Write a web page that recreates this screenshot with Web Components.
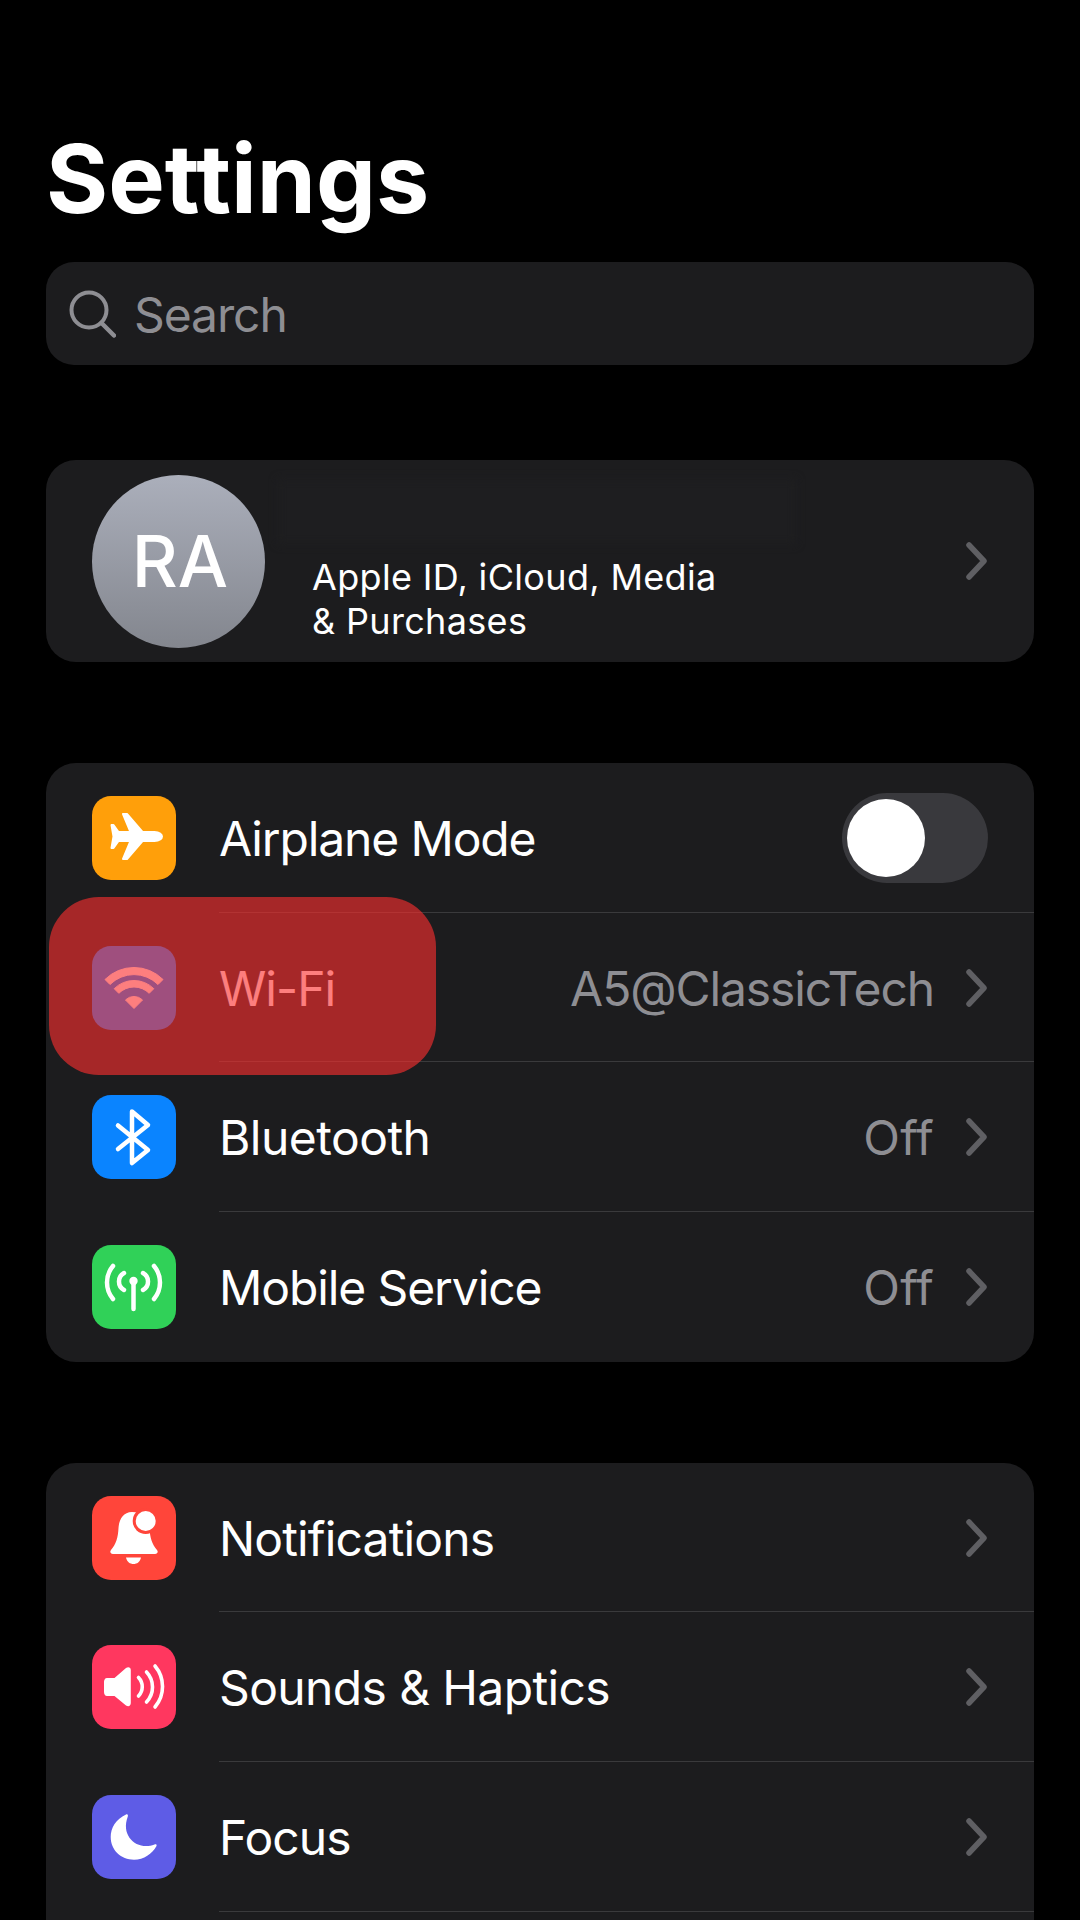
<!DOCTYPE html>
<html lang="en">
<head>
<meta charset="utf-8">
<title>Settings</title>
<style>
    html, body { margin: 0; background: #000; }
    body { width: 1080px; height: 1920px; overflow: hidden; font-family: Inter, "Liberation Sans", sans-serif; color: #fff; }
</style>
</head>
<body>
<settings-page>
    <settings-search slot="search">Search</settings-search>

    <profile-card slot="profile" initials="RA">Apple ID, iCloud, Media<br>&amp; Purchases</profile-card>

    <settings-group slot="groups">
        <settings-row color="#ff9f0a" label="Airplane Mode" toggle style="--track:-1.130px">
            <svg slot="icon" viewBox="0 0 84 84" width="84" height="84"><path fill="#fff" stroke="#fff" stroke-width="2" stroke-linejoin="round" d="M19.500 29H21.500L26.500 36H38.500L31 18H35L50.500 36H62.500C67.500 36 70 38.500 70 40.500C70 42.500 67.500 45 62.500 45H50.500L35 63H31L38.500 45H26.500L21.500 52H19.500L21.500 40.500Z"/></svg>
        </settings-row>
        <settings-row color="#0a84ff" label="Wi-Fi" value="A5@ClassicTech" style="--track:-0.950px">
            <svg slot="icon" viewBox="0 0 84 84" width="84" height="84"><g fill="#fff" stroke="#fff" stroke-width="1" stroke-linejoin="round"><path d="M13 33.500A41 41 0 0 1 71 33.500L66 38.500A34 34 0 0 0 18 38.500Z"/><path d="M22.200 42.700A28 28 0 0 1 61.800 42.700L57.200 47.300A21.500 21.500 0 0 0 26.800 47.300Z"/><path d="M42 62.500L33.500 54A12 12 0 0 1 50.500 54Z"/></g></svg>
        </settings-row>
        <settings-row color="#0a84ff" label="Bluetooth" value="Off" style="--track:-0.540px;--value-track:0.100px">
            <svg slot="icon" viewBox="0 0 84 84" width="84" height="84"><path fill="none" stroke="#fff" stroke-width="4.500" stroke-linecap="round" stroke-linejoin="round" d="M26 30.500L56 55L40 68V16.500L56 30L26 54"/></svg>
        </settings-row>
        <settings-row color="#30d158" label="Mobile Service" value="Off" last style="--track:-1.110px;--value-track:0.100px">
            <svg slot="icon" viewBox="0 0 84 84" width="84" height="84"><g fill="none" stroke="#fff" stroke-width="4.500" stroke-linecap="round"><path d="M41.500 38V64"/><path d="M32 28A9.700 9.700 0 0 0 32 45"/><path d="M51 28A9.700 9.700 0 0 1 51 45"/><path d="M21 21A25.700 25.700 0 0 0 21 54"/><path d="M62 21A25.700 25.700 0 0 1 62 54"/></g><circle cx="41.500" cy="36" r="4.200" fill="#fff"/></svg>
        </settings-row>
        <wifi-mark></wifi-mark>
    </settings-group>

    <settings-group slot="groups">
        <settings-row color="#ff453a" label="Notifications" style="--track:-0.850px">
            <svg slot="icon" viewBox="0 0 84 84" width="84" height="84"><path fill="#fff" d="M40 16C31 16 27 24 26.500 32C26 42 24 48 19 54C17.500 56 18.500 58 21 58H63C65.500 58 66.500 56 65 54C60 48 58 42 57.500 32C57 24 50 16 40 16Z"/><path fill="#fff" d="M34 61.500H49C48 66 45 68 41.500 68C38 68 35 66 34 61.500Z"/><circle cx="53.700" cy="25" r="13" fill="#ff453a"/><circle cx="53.700" cy="25" r="10" fill="#fff"/></svg>
        </settings-row>
        <settings-row color="#ff375f" label="Sounds &amp; Haptics" style="--track:-0.630px">
            <svg slot="icon" viewBox="0 0 84 84" width="84" height="84"><path fill="#fff" d="M15 33H22.500L34 23C36.500 21.500 38.800 22.500 38.800 25V58C38.800 61 36.500 62 34 60.500L22.500 51H15C13 51 12 49 12 47V37C12 35 13 33 15 33Z"/><g fill="none" stroke="#fff" stroke-width="3.600" stroke-linecap="round"><path d="M46.500 32.500A13.300 13.300 0 0 1 46.500 51"/><path d="M54.500 27A21.750 21.750 0 0 1 54.500 57"/><path d="M63 21A31.700 31.700 0 0 1 63 62"/></g></svg>
        </settings-row>
        <settings-row color="#5e5ce6" label="Focus" style="--track:-0.950px">
            <svg slot="icon" viewBox="0 0 84 84" width="84" height="84"><path fill="#fff" d="M34 19.500C24 24 18.700 33 18.700 42C18.700 55 29 64.700 42 64.700C52 64.700 60 59 64.500 51C65 49.500 64 49 62.500 49.500C46 56 28 42 35.800 21.500C36.300 19.800 35.500 19 34 19.500Z"/></svg>
        </settings-row>
        <settings-row blank></settings-row>
    </settings-group>
</settings-page>

<script>
const CHEVRON = `<svg viewBox="0 0 24 38" width="24" height="38"><path d="M5 3L20 19L5 35" fill="none" stroke="#5f5f63" stroke-width="5.500" stroke-linecap="round" stroke-linejoin="round"/></svg>`;

class SettingsPage extends HTMLElement {
    constructor() {
        super();
        this.attachShadow({ mode: "open" });
    }

    connectedCallback() {
        this.shadowRoot.innerHTML = `
            <style>
                :host { display: block; height: 1920px; overflow: hidden; box-sizing: border-box; padding: 124px 46px 0; }
                h1 { margin: 0 0 28px; font: 700 95px/110px Inter, "Liberation Sans", sans-serif; color: #fff; }
                .profile { display: block; margin-top: 95px; }
                .groups { display: flex; flex-direction: column; gap: 101px; margin-top: 101px; }
            </style>
            <h1>Settings</h1>
            <slot name="search"></slot>
            <div class="profile"><slot name="profile"></slot></div>
            <div class="groups"><slot name="groups"></slot></div>
        `;
    }
}

class SettingsSearch extends HTMLElement {
    constructor() {
        super();
        this.attachShadow({ mode: "open" });
    }

    connectedCallback() {
        this.shadowRoot.innerHTML = `
            <style>
                :host { display: flex; align-items: center; gap: 18px; height: 103px; box-sizing: border-box; padding-left: 23px; border-radius: 28px; background: #1c1c1e; color: #8e8e93; font: 400 48px Inter, "Liberation Sans", sans-serif; letter-spacing: -1.100px; }
                svg { flex: none; }
                .text { padding-top: 2px; }
            </style>
            <svg viewBox="0 0 47 48" width="47" height="48"><circle cx="20" cy="20" r="17.500" fill="none" stroke="#8e8e93" stroke-width="4"/><path d="M32.500 33L45 45.500" stroke="#8e8e93" stroke-width="4.500" stroke-linecap="round"/></svg>
            <span class="text"><slot></slot></span>
        `;
    }
}

class ProfileCard extends HTMLElement {
    constructor() {
        super();
        this.attachShadow({ mode: "open" });
    }

    connectedCallback() {
        this.shadowRoot.innerHTML = `
            <style>
                :host { display: flex; align-items: center; height: 202px; box-sizing: border-box; padding: 0 46px; border-radius: 30px; background: #1c1c1e; font: 400 36px/44px Inter, "Liberation Sans", sans-serif; letter-spacing: 0.330px; color: #fff; }
                .avatar { flex: none; box-sizing: border-box; width: 173px; height: 173px; padding-left: 3px; border-radius: 50%; display: flex; align-items: center; justify-content: center; background: linear-gradient(#abafbb, #83868e); font-size: 71px; font-weight: 500; line-height: 1; letter-spacing: 0; }
                .text { flex: 1; align-self: flex-start; margin-left: 47px; padding-top: 19px; }
                /* name is blurred out in the shot */
                .name { width: 518px; height: 65px; margin: 0 0 11px -34px; background: #1e1e20; filter: blur(4px); }
                svg { flex: none; }
            </style>
            <div class="avatar">${this.getAttribute("initials")}</div>
            <div class="text"><div class="name"></div><slot></slot></div>
            ${CHEVRON}
        `;
    }
}

class SettingsGroup extends HTMLElement {
    constructor() {
        super();
        this.attachShadow({ mode: "open" });
    }

    connectedCallback() {
        this.shadowRoot.innerHTML = `
            <style>
                :host { display: block; position: relative; border-radius: 30px; background: #1c1c1e; }
            </style>
            <slot></slot>
        `;
    }
}

class SettingsRow extends HTMLElement {
    constructor() {
        super();
        this.attachShadow({ mode: "open" });
    }

    connectedCallback() {
        const value = this.getAttribute("value");
        const label = this.getAttribute("label") || "";
        const blank = this.hasAttribute("blank");
        let trail = "";
        if (this.hasAttribute("toggle")) {
            trail = `<span class="toggle"><span class="knob"></span></span>`;
        } else if (!blank) {
            trail = `${value ? `<span class="value">${value}</span>` : ""}${CHEVRON}`;
        }
        this.shadowRoot.innerHTML = `
            <style>
                :host { display: flex; align-items: center; height: 149.700px; padding-left: 46px; font: 400 48px Inter, "Liberation Sans", sans-serif; color: #fff; }
                .icon { flex: none; width: 84px; height: 84px; border-radius: 19px; background: var(--tile); overflow: hidden; }
                .icon ::slotted(svg) { display: block; }
                .body { flex: 1; align-self: stretch; display: flex; align-items: center; box-sizing: border-box; margin-left: 43px; padding: 1px 46px 0 0; border-bottom: 1px solid #3a3a3c; }
                :host([last]) .body { border-bottom: 0; }
                .label { flex: 1; padding-top: 1px; letter-spacing: var(--track, -0.900px); }
                .value { color: #8e8e93; margin-right: 30px; padding-top: 1px; letter-spacing: var(--value-track, -1.100px); }
                .toggle { display: block; position: relative; width: 146px; height: 90px; border-radius: 45px; background: #39393d; }
                .knob { position: absolute; left: 5px; top: 6px; width: 78px; height: 78px; border-radius: 50%; background: #fff; }
                :host([blank]) .icon { visibility: hidden; }
                svg { flex: none; }
            </style>
            <div class="icon" style="--tile:${this.getAttribute("color") || "transparent"}"><slot name="icon"></slot></div>
            <div class="body">
                <span class="label">${label}</span>
                ${trail}
            </div>
        `;
    }
}

// red marker someone drew over the Wi-Fi row, it tints what lies under it
class WifiMark extends HTMLElement {
    constructor() {
        super();
        this.attachShadow({ mode: "open" });
    }

    connectedCallback() {
        this.shadowRoot.innerHTML = `
            <style>
                :host { display: block; position: absolute; left: 3px; top: 134px; width: 387px; height: 178px; border-radius: 50px; background: rgba(252, 46, 46, 0.62); }
            </style>
        `;
    }
}

customElements.define("settings-page", SettingsPage);
customElements.define("settings-search", SettingsSearch);
customElements.define("profile-card", ProfileCard);
customElements.define("settings-group", SettingsGroup);
customElements.define("settings-row", SettingsRow);
customElements.define("wifi-mark", WifiMark);
</script>
</body>
</html>
